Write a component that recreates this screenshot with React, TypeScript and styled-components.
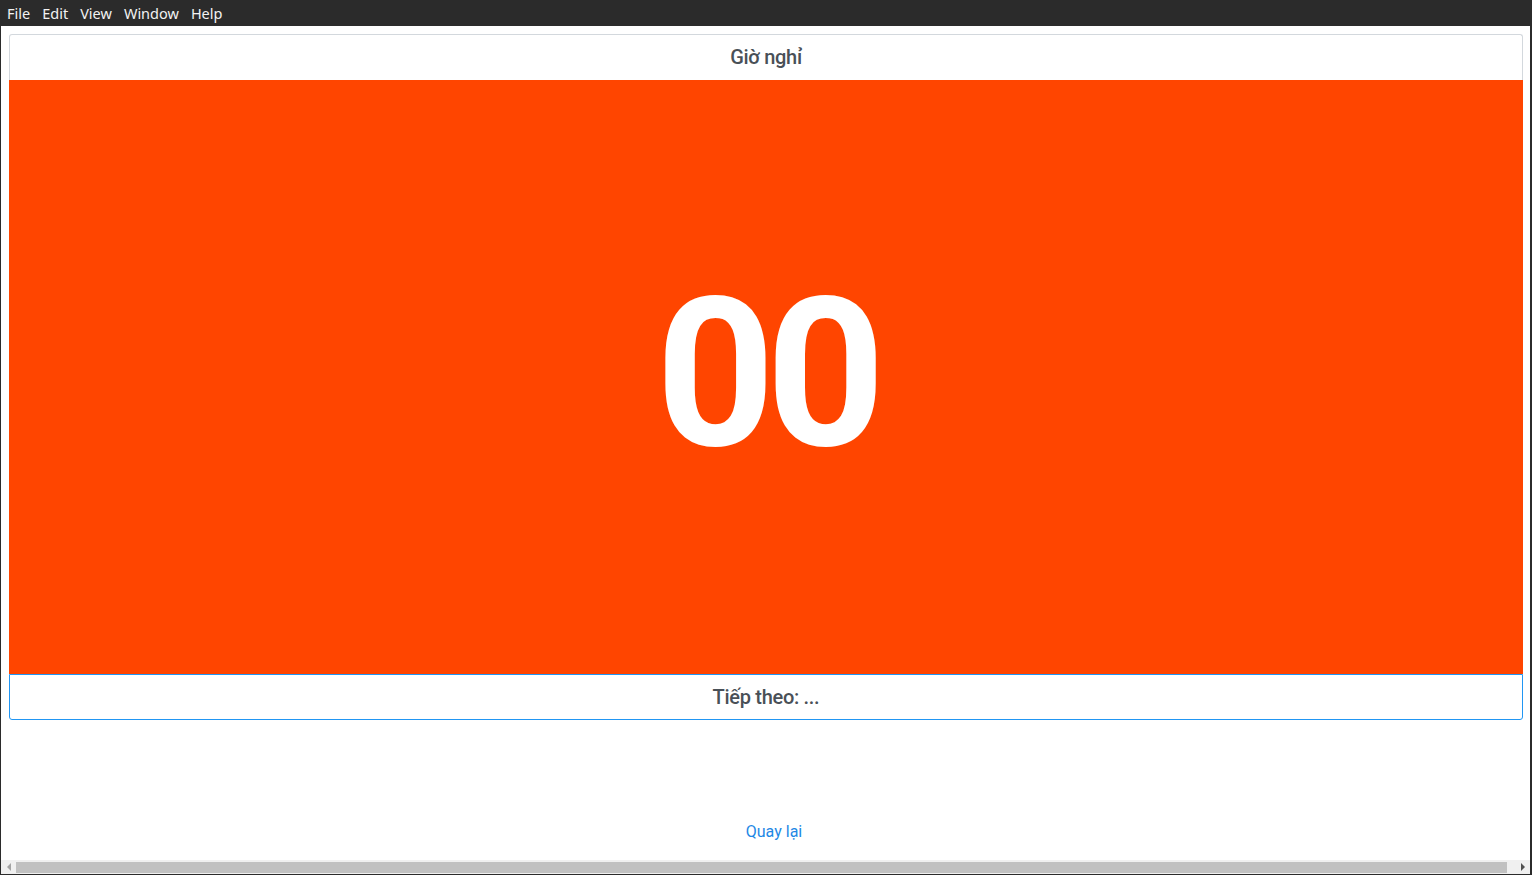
import React from "react";
import styled, { createGlobalStyle } from "styled-components";

const Global = createGlobalStyle`
  html, body { margin: 0; padding: 0; overflow: hidden; }
  body { font-family: Roboto, "Noto Sans", sans-serif; }
`;

const Frame = styled.div`
  width: 1532px;
  height: 875px;
  display: flex;
  flex-direction: column;
  background: #2b2b2b;
  box-sizing: border-box;
`;

const MenuBar = styled.div`
  height: 26px;
  display: flex;
  align-items: center;
  padding: 1px 0 0 7px;
  box-sizing: border-box;
  gap: 12px;
  background: #2b2b2b;
  flex: none;
`;

const MenuItem = styled.span`
  font-family: "Noto Sans", "Open Sans", sans-serif;
  font-size: 14.5px;
  color: #f2f2f2;
  line-height: 25px;
`;

const Window = styled.div`
  flex: 1;
  display: flex;
  flex-direction: column;
  background: #ffffff;
  margin: 0 2px 1px 1px;
  min-height: 0;
`;

const Content = styled.div`
  flex: 1;
  padding: 8px 7px 0 8px;
  display: flex;
  flex-direction: column;
  min-height: 0;
`;

const Card = styled.div`
  display: flex;
  flex-direction: column;
`;

const Header = styled.div`
  height: 46px;
  border: 1px solid #d3d8dd;
  border-bottom: none;
  border-radius: 3px 3px 0 0;
  display: flex;
  align-items: center;
  justify-content: center;
  font-size: 20px;
  font-weight: 500;
  color: #495057;
  letter-spacing: -0.3px;
  padding-bottom: 1px;
  box-sizing: border-box;
`;

const Timer = styled.div`
  height: 594px;
  background: #ff4500;
  display: flex;
  align-items: center;
  justify-content: center;
  color: #ffffff;
  font-size: 208px;
  font-weight: 700;
  letter-spacing: -9px;
  line-height: 1;
  padding-bottom: 6px;
  box-sizing: border-box;
`;

const Footer = styled.div`
  height: 44px;
  border: 1px solid #2196f3;
  border-radius: 0 0 3px 3px;
  display: flex;
  align-items: center;
  justify-content: center;
  font-size: 20px;
  font-weight: 500;
  color: #495057;
  letter-spacing: -0.3px;
`;

const LinkRow = styled.div`
  height: 139px;
  display: flex;
  align-items: flex-end;
  justify-content: center;
  padding-left: 16px;
  box-sizing: border-box;
  padding-bottom: 18px;
`;

const BackLink = styled.a`
  font-size: 16px;
  color: #1e88e5;
  text-decoration: none;
  cursor: pointer;
`;

const ScrollBar = styled.div`
  height: 14px;
  background: #f0f0f0;
  display: flex;
  align-items: center;
  flex: none;
`;

const Arrow = styled.div`
  width: 15px;
  height: 14px;
  display: flex;
  align-items: center;
  justify-content: center;
  flex: none;
`;

const Track = styled.div`
  flex: 1;
  height: 14px;
  display: flex;
  align-items: center;
  padding-right: 8px;
`;

const Thumb = styled.div`
  flex: 1;
  height: 11px;
  background: #c1c1c1;
`;

export default function App() {
  return (
    <>
      <Global />
      <Frame>
        <MenuBar>
          <MenuItem>File</MenuItem>
          <MenuItem>Edit</MenuItem>
          <MenuItem>View</MenuItem>
          <MenuItem>Window</MenuItem>
          <MenuItem>Help</MenuItem>
        </MenuBar>
        <Window>
          <Content>
            <Card>
              <Header>Giờ nghỉ</Header>
              <Timer>00</Timer>
              <Footer>Tiếp theo: ...</Footer>
            </Card>
            <LinkRow>
              <BackLink>Quay lại</BackLink>
            </LinkRow>
          </Content>
          <ScrollBar>
            <Arrow>
              <svg width="6" height="8" viewBox="0 0 6 8">
                <path d="M5 0 L1 4 L5 8 Z" fill="#a3a3a3" />
              </svg>
            </Arrow>
            <Track>
              <Thumb />
            </Track>
            <Arrow>
              <svg width="6" height="8" viewBox="0 0 6 8">
                <path d="M1 0 L5 4 L1 8 Z" fill="#505050" />
              </svg>
            </Arrow>
          </ScrollBar>
        </Window>
      </Frame>
    </>
  );
}
